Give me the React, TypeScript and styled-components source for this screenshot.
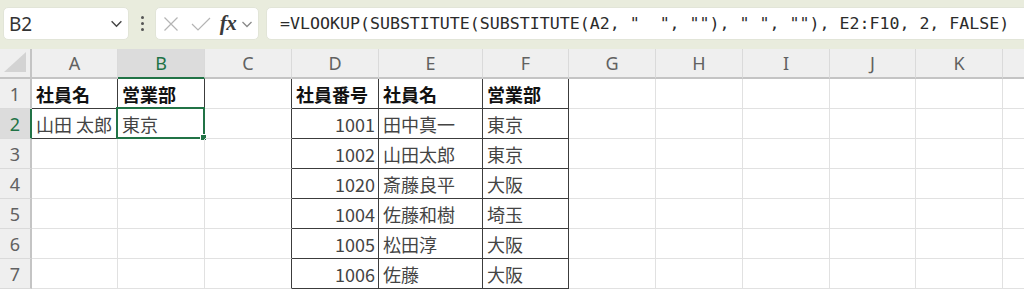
import React from 'react';
import styled, { createGlobalStyle } from 'styled-components';

const GlobalStyle = createGlobalStyle`
    html, body {
        margin: 0;
        padding: 0;
        width: 1024px;
        height: 289px;
        overflow: hidden;
        background: #ffffff;
    }
`

const Page = styled.div`
    width: 1024px;
    height: 289px;
    overflow: hidden;
    display: flex;
    flex-direction: column;
`

const Toolbar = styled.div`
    height: 49px;
    box-sizing: border-box;
    padding: 7px 0 9px 3px;
    background: #e9ecdd;
    display: flex;
    align-items: stretch;
    gap: 7px;
    flex-shrink: 0;
`

const Box = styled.div<{ $width: number; }>`
    width: ${ props => props.$width }px;
    flex-shrink: 0;
    box-sizing: border-box;
    background: #ffffff;
    border: 1px solid #e2e5d8;
    border-radius: 5px;
    display: flex;
    align-items: center;
`

const NameText = styled.span`
    flex: 1;
    padding-left: 5px;
    font-family: "Noto Sans", sans-serif;
    font-size: 19px;
    color: #333333;
`

const Dots = styled.div`
    width: 12px;
    flex-shrink: 0;
    display: flex;
    flex-direction: column;
    align-items: center;
    justify-content: center;
    gap: 3px;

    span {
        width: 3px;
        height: 3px;
        border-radius: 50%;
        background: #555555;
    }
`

const IconSlot = styled.span<{ $w: number; }>`
    width: ${ props => props.$w }px;
    flex-shrink: 0;
    display: flex;
    align-items: center;
    justify-content: center;
`

const Fx = styled.span`
    font-family: "Liberation Serif", serif;
    font-style: italic;
    font-weight: bold;
    font-size: 21px;
    color: #3a3a3a;
    letter-spacing: -0.5px;
`

const FormulaText = styled.span`
    padding-left: 13px;
    font-family: "DejaVu Sans Mono", monospace;
    font-size: 16.6px;
    color: #2b2b2b;
    white-space: pre;
`

const Grid = styled.div`
    display: grid;
    grid-template-columns: 32px 86px 87px 87px 87px 104px 86px 87px 87px 87px 86px 87px 40px;
    grid-auto-rows: 30px;
`

const Corner = styled.div`
    background: #efefef;
    border-bottom: 2px solid #c4c4c4;
    border-right: 2px solid #c4c4c4;
    box-sizing: border-box;
    display: flex;
    align-items: flex-end;
    justify-content: flex-end;
    padding: 0 4px 5px 0;
`

const ColHead = styled.div<{ $active?: boolean; }>`
    box-sizing: border-box;
    background: ${ props => props.$active ? '#dcdcdc' : '#efefef' };
    border-right: 1px solid #dadada;
    border-bottom: 2px solid ${ props => props.$active ? '#217346' : '#c4c4c4' };
    display: flex;
    align-items: center;
    justify-content: center;
    font-family: "Noto Sans", sans-serif;
    font-size: 18px;
    color: ${ props => props.$active ? '#217346' : '#616161' };
`

const RowHead = styled.div<{ $active?: boolean; }>`
    box-sizing: border-box;
    background: ${ props => props.$active ? '#dcdcdc' : '#efefef' };
    border-right: 2px solid ${ props => props.$active ? '#217346' : '#c4c4c4' };
    border-bottom: 1px solid #dadada;
    display: flex;
    align-items: center;
    justify-content: center;
    font-family: "Noto Sans", sans-serif;
    font-size: 18px;
    color: ${ props => props.$active ? '#217346' : '#616161' };
`

const Cell = styled.div<{ $r?: boolean; $b?: boolean; $bold?: boolean; $num?: boolean; }>`
    position: relative;
    box-sizing: border-box;
    border-right: 1px solid ${ props => props.$r ? '#3c3c3c' : '#e1e1e1' };
    border-bottom: 1px solid ${ props => props.$b ? '#3c3c3c' : '#e1e1e1' };
    display: flex;
    align-items: center;
    justify-content: ${ props => props.$num ? 'flex-end' : 'flex-start' };
    padding: 0 3px 0 4px;
    font-family: "Noto Sans CJK JP", "Noto Sans", sans-serif;
    font-size: 18px;
    font-weight: ${ props => props.$bold ? 700 : 400 };
    color: ${ props => props.$bold ? '#111111' : '#444444' };
    white-space: nowrap;
    overflow: visible;
`

const Selection = styled.div`
    position: absolute;
    top: -2px;
    left: -2px;
    right: -1px;
    bottom: -1px;
    border: 2px solid #217346;
    pointer-events: none;
`

const FillHandle = styled.div`
    position: absolute;
    right: -4px;
    bottom: -4px;
    width: 5px;
    height: 5px;
    background: #217346;
    border: 1px solid #ffffff;
`

const Chevron: React.FC<{ color: string; size: number; }> = ({ color, size }) => (
    <svg width={ size } height={ size } viewBox="0 0 12 12">
        <polyline points="1.5,4 6,8.5 10.5,4" fill="none" stroke={ color } strokeWidth="1.3"/>
    </svg>
)

const columns = [ 'A', 'B', 'C', 'D', 'E', 'F', 'G', 'H', 'I', 'J', 'K', '' ];

interface ICellData {
    text?: string;
    bold?: boolean;
    num?: boolean;
}

const rows: Record<number, Record<string, ICellData>> = {
    1: {
        A: { text: '社員名', bold: true },
        B: { text: '営業部', bold: true },
        D: { text: '社員番号', bold: true },
        E: { text: '社員名', bold: true },
        F: { text: '営業部', bold: true },
    },
    2: {
        A: { text: '山田 太郎' },
        B: { text: '東京' },
        D: { text: '1001', num: true },
        E: { text: '田中真一' },
        F: { text: '東京' },
    },
    3: { D: { text: '1002', num: true }, E: { text: '山田太郎' }, F: { text: '東京' } },
    4: { D: { text: '1020', num: true }, E: { text: '斎藤良平' }, F: { text: '大阪' } },
    5: { D: { text: '1004', num: true }, E: { text: '佐藤和樹' }, F: { text: '埼玉' } },
    6: { D: { text: '1005', num: true }, E: { text: '松田淳' }, F: { text: '大阪' } },
    7: { D: { text: '1006', num: true }, E: { text: '佐藤' }, F: { text: '大阪' } },
};

const isBoxed = (col: string, row: number) => {
    if ((col === 'A' || col === 'B') && row <= 2) return true;
    return col === 'D' || col === 'E' || col === 'F';
}

const formula = '=VLOOKUP(SUBSTITUTE(SUBSTITUTE(A2, "  ", ""), " ", ""), E2:F10, 2, FALSE)';

const App: React.FC = () => {
    return (
        <Page>
            <GlobalStyle/>
            <Toolbar>
                <Box $width={ 126 }>
                    <NameText>B2</NameText>
                    <IconSlot $w={ 24 }><Chevron color="#444444" size={ 13 }/></IconSlot>
                </Box>
                <Dots><span/><span/><span/></Dots>
                <Box $width={ 104 }>
                    <IconSlot $w={ 30 }>
                        <svg width="16" height="16" viewBox="0 0 16 16">
                            <path d="M1.5 1.5 L14.5 14.5 M14.5 1.5 L1.5 14.5" stroke="#b4b4b4" strokeWidth="1.2" fill="none"/>
                        </svg>
                    </IconSlot>
                    <IconSlot $w={ 30 }>
                        <svg width="20" height="16" viewBox="0 0 20 16">
                            <polyline points="1,8 7,14 19,2" stroke="#b4b4b4" strokeWidth="1.2" fill="none"/>
                        </svg>
                    </IconSlot>
                    <IconSlot $w={ 24 }><Fx>fx</Fx></IconSlot>
                    <IconSlot $w={ 14 }><Chevron color="#8a8a8a" size={ 12 }/></IconSlot>
                </Box>
                <Box $width={ 780 }>
                    <FormulaText>{ formula }</FormulaText>
                </Box>
            </Toolbar>
            <Grid>
                <Corner>
                    <svg width="22" height="20" viewBox="0 0 22 20">
                        <polygon points="22,0 22,20 0,20" fill="#d3d3d3"/>
                    </svg>
                </Corner>
                { columns.map(col => <ColHead key={ col || 'L' } $active={ col === 'B' }>{ col }</ColHead>) }
                { [ 1, 2, 3, 4, 5, 6, 7 ].map(row => (
                    <React.Fragment key={ row }>
                        <RowHead $active={ row === 2 }>{ row }</RowHead>
                        { columns.map(col => {
                            const data = rows[ row ][ col ] || {};
                            const boxed = isBoxed(col, row);
                            const selected = col === 'B' && row === 2;
                            return (
                                <Cell key={ col || 'L' } $r={ boxed || col === 'C' } $b={ boxed } $bold={ data.bold } $num={ data.num }>
                                    { data.text }
                                    { selected ? <Selection><FillHandle/></Selection> : null }
                                </Cell>
                            )
                        }) }
                    </React.Fragment>
                )) }
            </Grid>
        </Page>
    )
}

export default App;
